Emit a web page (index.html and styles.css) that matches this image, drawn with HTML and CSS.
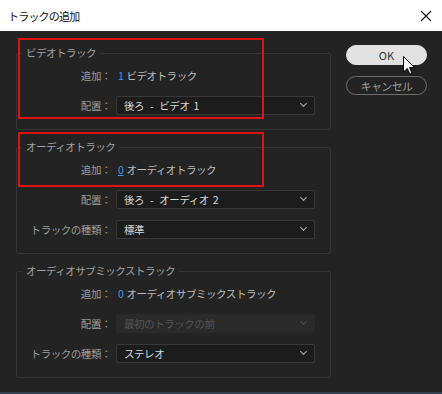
FILE: index.html
```html
<!DOCTYPE html>
<html lang="ja">
<head>
    <meta charset="UTF-8">
    <title>トラックの追加</title>
    <link rel="stylesheet" href="styles.css">
</head>
<body>
    <div class="dialog">
        <div class="titlebar">
            <span class="title">トラックの追加</span>
            <svg class="close" width="12" height="12" viewBox="0 0 12 12">
                <path d="M1 1 L11 11 M11 1 L1 11" stroke="#111" stroke-width="1.1" fill="none"/>
            </svg>
        </div>

        <div class="content">
            <div class="groups">
                <fieldset class="group">
                    <legend>ビデオトラック</legend>
                    <div class="row">
                        <span class="label">追加：</span>
                        <span class="value"><span class="num">1</span>ビデオトラック</span>
                    </div>
                    <div class="row">
                        <span class="label">配置：</span>
                        <div class="select">後ろ<span class="dash">-</span>ビデオ<span class="idx">1</span><span class="chev"></span></div>
                    </div>
                </fieldset>

                <fieldset class="group">
                    <legend>オーディオトラック</legend>
                    <div class="row">
                        <span class="label">追加：</span>
                        <span class="value"><span class="num num-edit">0</span>オーディオトラック</span>
                    </div>
                    <div class="row">
                        <span class="label">配置：</span>
                        <div class="select">後ろ<span class="dash">-</span>オーディオ<span class="idx">2</span><span class="chev"></span></div>
                    </div>
                    <div class="row">
                        <span class="label">トラックの種類：</span>
                        <div class="select">標準<span class="chev"></span></div>
                    </div>
                </fieldset>

                <fieldset class="group">
                    <legend>オーディオサブミックストラック</legend>
                    <div class="row">
                        <span class="label">追加：</span>
                        <span class="value"><span class="num">0</span>オーディオサブミックストラック</span>
                    </div>
                    <div class="row">
                        <span class="label">配置：</span>
                        <div class="select disabled">最初のトラックの前<span class="chev"></span></div>
                    </div>
                    <div class="row">
                        <span class="label">トラックの種類：</span>
                        <div class="select">ステレオ<span class="chev"></span></div>
                    </div>
                </fieldset>
            </div>

            <div class="buttons">
                <button class="btn btn-ok">OK</button>
                <button class="btn btn-cancel">キャンセル</button>
            </div>
        </div>

        <!-- annotation boxes -->
        <div class="mark mark-video"></div>
        <div class="mark mark-audio"></div>

        <svg class="cursor" width="13" height="20" viewBox="0 0 13 20">
            <path d="M0.5 0.5 L0.5 16 L4.3 12.4 L6.8 18.3 L9 17.3 L6.6 11.6 L11.5 11.6 Z" fill="#fff" stroke="#000" stroke-width="1"/>
        </svg>
    </div>
</body>
</html>
```

FILE: styles.css
```css
body {
    margin: 0;
    background: #34414f;
    font-family: "Noto Sans CJK JP", "Noto Sans", sans-serif;
    font-size: 10.5px;
    letter-spacing: -0.45px;
}

.dialog {
    position: relative;
    width: 442px;
    height: 392px;
    background: #232323;
    overflow: hidden;
}

.titlebar {
    height: 31px;
    background: #fff;
    display: flex;
    align-items: center;
    justify-content: space-between;
    padding: 0 10px 0 8px;
    box-sizing: border-box;
}

.title {
    color: #111;
    font-size: 11px;
    letter-spacing: -0.8px;
}

.content {
    display: flex;
    padding: 14px 15px 0 16px;
    gap: 15px;
}

.groups {
    width: 315px;
    display: flex;
    flex-direction: column;
    gap: 9px;
}

.group {
    margin: 0;
    padding: 5px 0 14px 0;
    border: 1px solid #353535;
    border-radius: 2px;
    display: flex;
    flex-direction: column;
    gap: 11px;
}

.group legend {
    margin-left: 5px;
    padding: 0 4px;
    color: #a2a2a2;
    line-height: 16px;
    letter-spacing: -0.5px;
}

.row {
    display: flex;
    align-items: center;
    height: 19px;
    gap: 5px;
}

.label {
    width: 94px;
    text-align: right;
    color: #9c9c9c;
}

.value {
    color: #bdbdbd;
}

.num {
    color: #4c95e0;
    margin: 0 3px 0 2px;
}

.num-edit {
    text-decoration: underline;
}

.select {
    position: relative;
    width: 199px;
    height: 19px;
    box-sizing: border-box;
    background: #1c1c1c;
    border: 1px solid #383838;
    border-radius: 2px;
    color: #dadada;
    padding-left: 7px;
    line-height: 17px;
}

.dash {
    margin: 0 6px;
}

.idx {
    margin-left: 4px;
}

.select.disabled {
    background: #2a2a2a;
    border-color: #2a2a2a;
    color: #555;
}

.chev {
    position: absolute;
    right: 8px;
    top: 4px;
    width: 4px;
    height: 4px;
    border-right: 1px solid #b0b0b0;
    border-bottom: 1px solid #b0b0b0;
    transform: rotate(45deg);
}

.select.disabled .chev {
    border-color: #4a4a4a;
}

.buttons {
    display: flex;
    flex-direction: column;
    gap: 11px;
}

.btn {
    width: 81px;
    margin: 0;
    border-radius: 10px;
    font-family: inherit;
    font-size: 11px;
    padding: 0;
}

.btn-ok {
    height: 20px;
    background: #e2e2e2;
    border: 1px solid #e2e2e2;
    color: #333;
    letter-spacing: 0;
}

.btn-cancel {
    height: 19px;
    background: transparent;
    border: 1px solid #6e6e6e;
    color: #9c9c9c;
    letter-spacing: -0.6px;
}

.mark {
    position: absolute;
    left: 18px;
    width: 246px;
    border: 2px solid #e01212;
    box-sizing: border-box;
}

.mark-video {
    top: 38px;
    height: 81px;
}

.mark-audio {
    top: 132px;
    height: 55px;
}

.cursor {
    position: absolute;
    left: 403px;
    top: 56px;
}
```
